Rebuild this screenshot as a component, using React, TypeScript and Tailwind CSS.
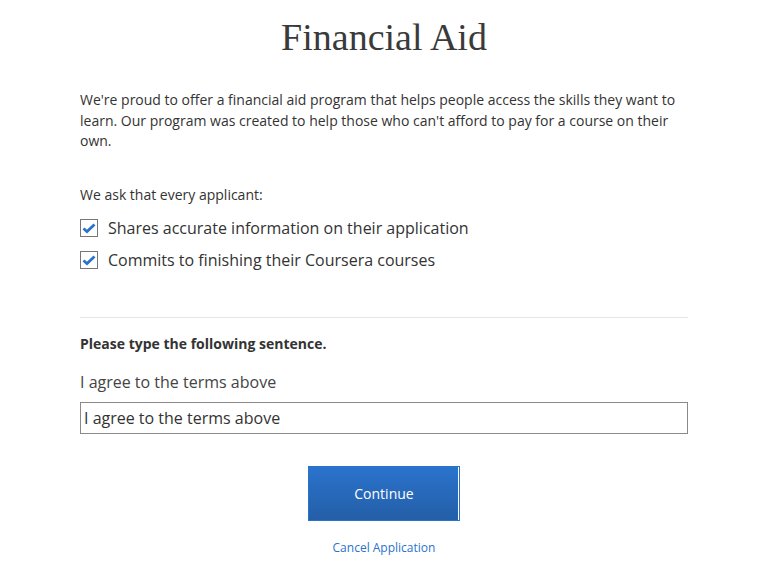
export default function App() {
  return (
    <div className="min-h-screen bg-white text-[#333] font-['Open_Sans',sans-serif]">
      <div className="mx-auto w-[608px] pt-[15px]">
        <h1 className="text-center font-['Liberation_Serif',serif] text-[38px] leading-[44px] text-[#3a3a3a]">
          Financial Aid
        </h1>

        <p className="mt-[31px] text-[14px] leading-[20.5px]">
          We're proud to offer a financial aid program that helps people access the skills they want to
          learn. Our program was created to help those who can't afford to pay for a course on their
          own.
        </p>

        <p className="mt-[33px] text-[14px] leading-[20px]">We ask that every applicant:</p>

        <div className="mt-[7px] flex flex-col">
          {[
            "Shares accurate information on their application",
            "Commits to finishing their Coursera courses",
          ].map((t) => (
            <label key={t} className="flex h-[32px] items-center gap-[10px] text-[16px]">
              <span className="flex h-[18px] w-[18px] items-center justify-center border border-[#777] bg-white">
                <svg width="14" height="12" viewBox="0 0 14 12">
                  <path d="M1.5 6.5 L5 9.5 L12.5 2.5" fill="none" stroke="#2a73cc" strokeWidth="2.8" />
                </svg>
              </span>
              {t}
            </label>
          ))}
        </div>

        <div className="mt-[41px] border-t border-[#e5e5e5]" />

        <p className="mt-[16px] text-[14px] font-bold leading-[20px]">
          Please type the following sentence.
        </p>
        <p className="mt-[17px] text-[16px] leading-[22px] text-[#444]">I agree to the terms above</p>
        <input
          readOnly
          value="I agree to the terms above"
          className="mt-[9px] block h-[32px] w-full border border-[#8a8a8a] px-[3px] text-[16px] text-[#333] outline-none"
        />

        <div className="mt-[32px] flex flex-col items-center">
          <button className="h-[55px] w-[152px] border border-[#2a73cc] bg-gradient-to-b from-[#2a73cc] to-[#245fa8] text-[14px] text-white shadow-[inset_-1px_0_0_#fff]">
            Continue
          </button>
          <a className="mt-[19px] text-[12px] leading-[16px] text-[#2a73cc]">Cancel Application</a>
        </div>
      </div>
    </div>
  );
}
